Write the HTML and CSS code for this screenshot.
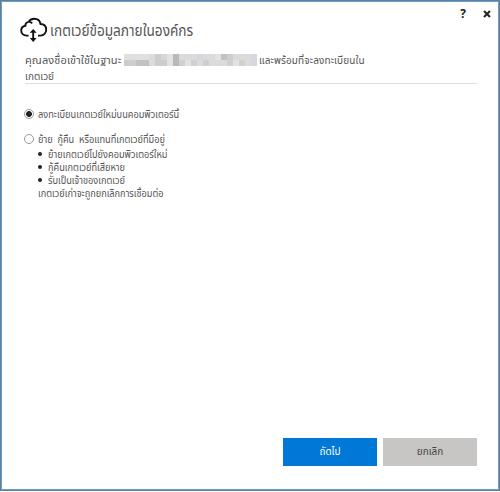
FILE: index.html
```html
<!DOCTYPE html>
<html lang="th">
<head>
<meta charset="utf-8">
<title>เกตเวย์ข้อมูลภายในองค์กร</title>
<link rel="stylesheet" href="styles.css">
</head>
<body>
<main class="window">
  <div class="controls"><button>?</button><button class="close" aria-label="ปิด"><svg width="8" height="8" viewBox="0 0 8 8"><path d="M1 1L7 7M7 1L1 7"/></svg></button></div>
  <header class="title">
    <svg class="cloud" width="28" height="26" viewBox="0 0 28 26"><path d="M8.6 18.6H6.5C3.5 18.6 1.2 16.4 1.2 13.6C1.2 11 3 9.2 5.4 8.8C5.2 6.6 6.7 5 8.8 4.9C10.2 4.8 11.3 5.3 12.2 6.3M8.8 4.9C9.8 2.7 11.7 1.7 14.2 1.7C17.5 1.7 20 3.8 20.5 7C24 7.1 26.2 9.4 26.2 12.7C26.2 16 23.7 18.6 20.5 18.6H18M13.2 13.5V23"/><path class="heads" d="M9.8 15.8L13.2 11.9L16.6 15.8ZM9.8 21L13.2 24.9L16.6 21Z"/></svg>
    <h1>เกตเวย์ข้อมูลภายในองค์กร</h1>
  </header>
  <section class="account">
    <div class="line first"><span class="t signed">คุณลงชื่อเข้าใช้ในฐานะ</span><svg class="mosaic" width="133" height="12" shape-rendering="crispEdges"><rect width="133" height="12" fill="#dadbda"/><path fill="#e0e0de" d="M0 0h25v6H0z"/><path fill="#d1cccc" d="M0 6h6v6H0zM31 0h6v6h-6zM31 6h12v6H31z"/><path fill="#cbcfd3" d="M6 6h6v6H6zM103 0h6v6h-6zM79 6h6v6h-6z"/><path fill="#c2c2c1" d="M12 6h13v6H12zM97 0h6v6h-6z"/><path fill="#b9b9b8" d="M49 0h6v12h-6z"/><path fill="#e1e3e2" d="M43 0h6v12h-6zM61 6h6v6h-6zM91 0h6v6h-6zM109 6h6v6h-6z"/><path fill="#d0d0cf" d="M55 6h6v6h-6zM67 6h6v6h-6zM103 6h6v6h-6zM115 6h6v6h-6z"/><path fill="#d4d8de" d="M127 0h6v12h-6zM37 0h6v6h-6zM73 0h6v6h-6z"/></svg><span class="t ready">และพร้อมที่จะลงทะเบียนใน</span></div>
    <div class="line"><span class="t gateway">เกตเวย์</span></div>
  </section>
  <section class="options">
    <label class="option"><i class="radio on"></i><span class="t narrow">ลงทะเบียนเกตเวย์ใหม่บนคอมพิวเตอร์นี้</span></label>
    <label class="option second"><i class="radio"></i><span class="t narrow">ย้าย&nbsp; กู้คืน&nbsp; หรือแทนที่เกตเวย์ที่มีอยู่</span></label>
    <ul>
      <li><span class="t narrow">ย้ายเกตเวย์ไปยังคอมพิวเตอร์ใหม่</span></li>
      <li><span class="t narrow">กู้คืนเกตเวย์ที่เสียหาย</span></li>
      <li><span class="t narrow">รับเป็นเจ้าของเกตเวย์</span></li>
    </ul>
    <p><span class="t narrow">เกตเวย์เก่าจะถูกยกเลิกการเชื่อมต่อ</span></p>
  </section>
  <footer><button class="primary">ถัดไป</button><button class="cancel">ยกเลิก</button></footer>
</main>
</body>
</html>
```
FILE: styles.css
```css
* { box-sizing: border-box; margin: 0; padding: 0; }
body { background: #fff; font-family: "Open Sans", "Noto Sans Thai", sans-serif; color: #555; font-size: 10px; }
.window { width: 500px; height: 491px; border: 1px solid #6d7b88; box-shadow: inset 0 0 0 1px #5ba3e0; display: flex; flex-direction: column; }
button { border: 0; background: none; font: inherit; }
.controls { display: flex; justify-content: flex-end; height: 16px; padding: 5px 8px 0 0; gap: 17px; }
.controls button { font-size: 12px; font-weight: 700; line-height: 15px; height: 15px; color: #222; }
.close { display: flex; align-items: center; }
.close path { stroke: #222; stroke-width: 2; fill: none; }
.title { display: flex; height: 26px; margin-left: 19px; align-items: center; gap: 2px; }
.cloud path { fill: none; stroke: #111; stroke-width: 1.9; }
.cloud .heads { fill: #111; stroke: none; }
h1 { font-size: 15px; font-weight: 400; line-height: 26px; white-space: nowrap; transform: scaleX(.907); transform-origin: left; }
.account { margin: 9px 22px 0 24px; height: 32px; border-bottom: 1px solid #ddd; }
.line { display: flex; height: 15px; align-items: center; white-space: nowrap; }
.first { margin-bottom: 1px; }
.mosaic { flex: none; }
.t { display: inline-block; white-space: nowrap; font-size: 10px; line-height: 14px; }
.signed { width: 99px; font-size: 11px; letter-spacing: .1px; }
.ready { margin-left: 2px; letter-spacing: .1px; }
.options { margin: 22px 0 0 23px; }
.option { display: flex; align-items: center; height: 16px; gap: 4px; }
.second { margin-top: 9px; }
.radio { width: 10px; height: 10px; border: 1px solid #999; border-radius: 50%; }
.radio.on { background: radial-gradient(circle, #222 0 2.6px, #fff 3.2px); }
.narrow { transform: scaleX(.92); transform-origin: left; }
ul { list-style: none; margin-left: 14px; }
li { height: 13px; display: flex; align-items: center; }
li::before { content: ""; width: 4px; height: 4px; border-radius: 50%; background: #222; margin-right: 6px; }
p { margin-left: 14px; height: 13px; }
footer { margin: auto 22px 24px auto; display: flex; gap: 6px; }
footer button { width: 94px; height: 28px; font-size: 10px; }
.primary { background: #0078d7; color: #fff; }
.cancel { background: #c8c6c4; color: #444; }
```
